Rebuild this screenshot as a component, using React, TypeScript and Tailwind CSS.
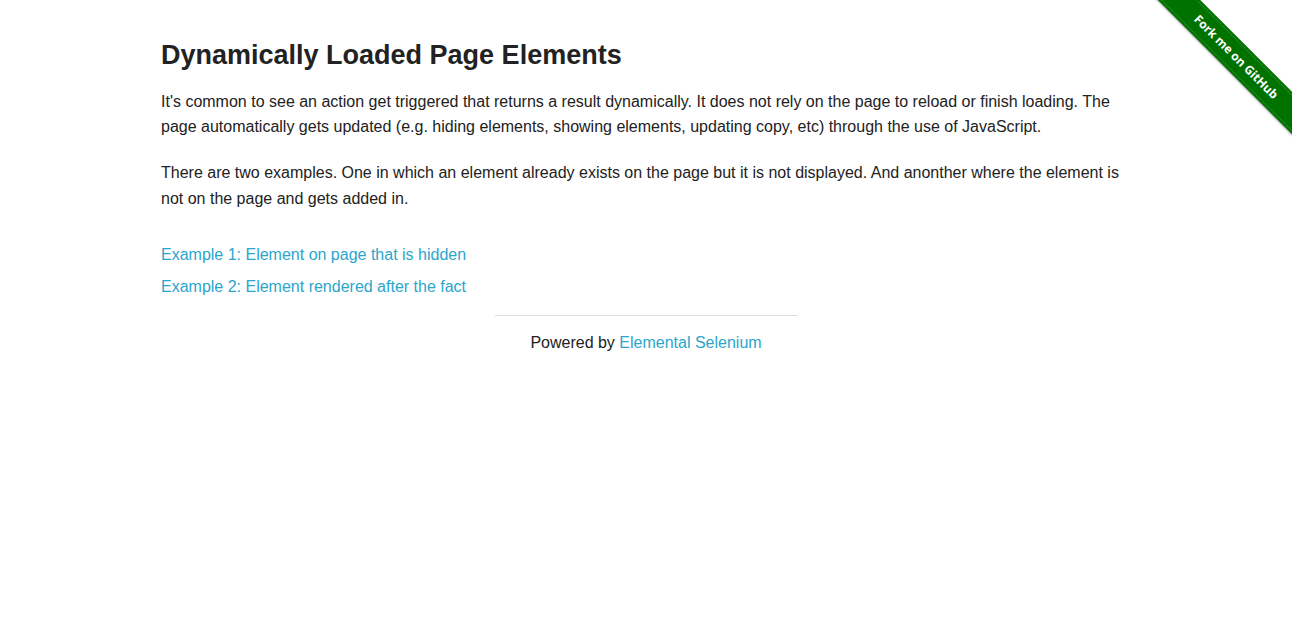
import React from 'react';

const ForkRibbon: React.FC = () => (
  <div className="absolute top-0 right-0 w-[149px] h-[149px] overflow-hidden pointer-events-none">
    <div className="absolute left-[-7px] top-[42px] w-[200px] h-[30px] rotate-45 bg-[#007200] shadow-[0_1px_2px_rgba(0,0,0,0.3)] flex items-center justify-center">
      <div className="absolute inset-x-0 top-[2px] border-t border-dotted border-white/25" />
      <div className="absolute inset-x-0 bottom-[2px] border-b border-dotted border-white/25" />
      <span className="text-white text-[12px] font-bold font-['Open_Sans',sans-serif] leading-none">
        Fork me on GitHub
      </span>
    </div>
  </div>
);

const App: React.FC = () => {
  return (
    <div className="min-h-screen bg-white relative font-['Liberation_Sans',Arial,sans-serif] text-[#222222]">
      <ForkRibbon />

      <div className="max-w-[1000px] mx-auto px-[15px] pt-[37px]">
        <h3 className="text-[27px] leading-[1.4] font-bold mb-[14px]">Dynamically Loaded Page Elements</h3>
        <p className="text-base leading-[1.6] mb-5">
          It's common to see an action get triggered that returns a result dynamically. It does not rely on the page to
          reload or finish loading. The page automatically gets updated (e.g. hiding elements, showing elements, updating
          copy, etc) through the use of JavaScript.
        </p>
        <p className="text-base leading-[1.6]">
          There are two examples. One in which an element already exists on the page but it is not displayed. And
          anonther where the element is not on the page and gets added in.
        </p>

        <div className="mt-[28px] flex flex-col items-start text-base leading-[32px]">
          <a href="#" className="text-[#2ba6cb]">Example 1: Element on page that is hidden</a>
          <a href="#" className="text-[#2ba6cb]">Example 2: Element rendered after the fact</a>
        </div>
      </div>

      <div className="max-w-[1000px] mx-auto">
        <div className="w-[333px] mx-auto px-[15px]">
          <hr className="border-t border-[#dddddd] mt-[12px] mb-[14px]" />
          <div className="text-center text-base leading-[1.6]">
            Powered by <a href="#" className="text-[#2ba6cb]">Elemental Selenium</a>
          </div>
        </div>
      </div>
    </div>
  );
};

export default App;
